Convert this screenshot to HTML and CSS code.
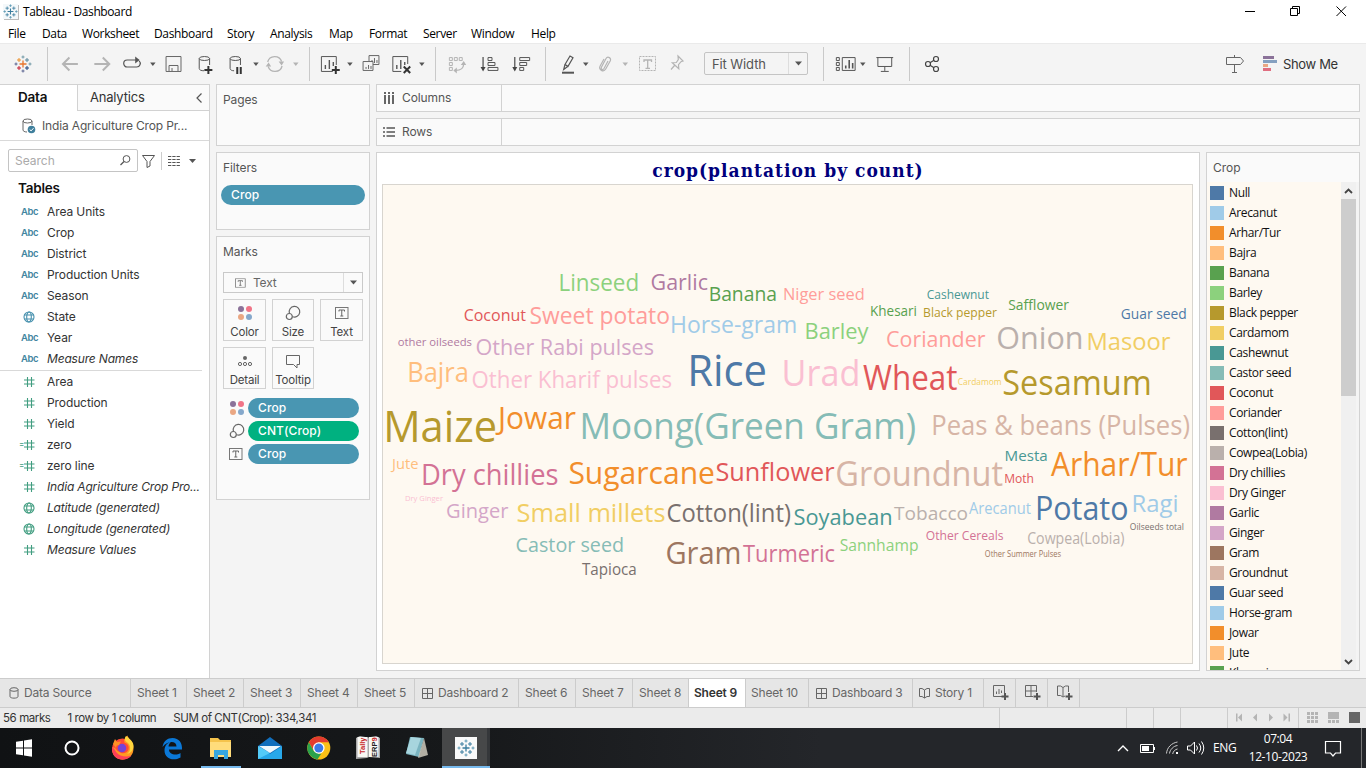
FILE: index.html
```html
<!DOCTYPE html>
<html lang="en">
<head>
<meta charset="utf-8">
<title>Tableau - Dashboard</title>
<link rel="stylesheet" href="styles.css">
</head>
<body>
<svg class="defs" width="0" height="0">
  <defs>
    <symbol id="caret" viewBox="0 0 7 5"><path d="M0 .5h7L3.5 4.5z" fill="currentColor"/></symbol>
    <symbol id="hash" viewBox="0 0 12 12"><path d="M4.500 1v10M8.500 1v10M1 4h10.500M1 8h10.500" fill="none" stroke="currentColor" stroke-width="1.100"/></symbol>
    <symbol id="globe" viewBox="0 0 12 12"><g fill="none" stroke="currentColor" stroke-width="1.100"><circle cx="6" cy="6" r="5"/><ellipse cx="6" cy="6" rx="2.300" ry="5"/><path d="M1.500 4h9M1.500 8h9"/></g></symbol>
    <symbol id="dots" viewBox="0 0 16 16"><circle cx="4" cy="4" r="3" fill="#8b7299"/><circle cx="12" cy="4" r="3" fill="#f07487"/><circle cx="4" cy="12" r="3" fill="#eaa783"/><circle cx="12" cy="12" r="3" fill="#85a8cb"/></symbol>
    <symbol id="size" viewBox="0 0 16 16"><g fill="none" stroke="#666" stroke-width="1.200"><path d="M4.400 8.300A5.300 5.300 0 1 1 7.600 11.700"/><circle cx="4.300" cy="11.500" r="3"/></g></symbol>
    <symbol id="tbox" viewBox="0 0 14 12"><rect x=".5" y=".5" width="12.500" height="11" fill="none" stroke="#777"/><path d="M4 4.500V3h5.500v1.500M6.750 3v6M5.300 9h3" fill="none" stroke="#666"/></symbol>
    <symbol id="window" viewBox="0 0 11 11"><path d="M.5.5h10v10H.5zM5.500.5v10M.5 5.500h10" fill="none" stroke="#666"/></symbol>
    <symbol id="book" viewBox="0 0 11 12"><path d="M.5 1.500h2.500l2.500 1.500L8 1.500h2.500v8H8L5.500 11 3 9.500H.5zM5.500 3v8" fill="none" stroke="#666"/></symbol>
    <symbol id="spark" viewBox="0 0 18 18"><path d="M9 5.500v7M5.500 9h7" stroke="var(--a,#e8762d)" stroke-width="1.300"/><path d="M5 3v4M3 5h4" stroke="var(--b,#eb912c)"/><path d="M13 3v4M11 5h4" stroke="var(--c,#5b879b)"/><path d="M5 11v4M3 13h4" stroke="var(--d,#c72035)"/><path d="M13 11v4M11 13h4" stroke="var(--e,#1f447e)"/><path d="M9 .5v3M7.500 2h3M16 7.500v3M14.500 9h3" stroke="var(--f,#7199a6)"/><path d="M2 7.500v3M.5 9h3M9 14.500v3M7.500 16h3" stroke="var(--g,#5c6692)"/></symbol>
  </defs>
</svg>

<header class="titlebar">
  <svg class="app-icon blue" width="15" height="15" viewBox="0 0 18 18"><use href="#spark"/></svg>
  <span class="app-title">Tableau - Dashboard</span>
  <svg class="win-buttons" width="110" height="21" viewBox="1240 0 110 21"><g fill="none" stroke="#000"><path d="M1245 10.500h10M1290.500 7.500h7v7h-7zM1292.500 7v-1.500h7v7H1298M1336.500 5.500l9.500 9.500M1346 5.500l-9.500 9.500"/></g></svg>
</header>

<nav class="menubar">
  <span>File</span><span>Data</span><span>Worksheet</span><span>Dashboard</span><span>Story</span><span>Analysis</span><span>Map</span><span>Format</span><span>Server</span><span>Window</span><span>Help</span>
</nav>

<div class="toolbar">
  <div class="tools t1"><svg width="18" height="18"><use href="#spark"/></svg></div>
  <svg class="tools" width="262" height="34" viewBox="48 47 262 34">
    <g fill="none" stroke="#b4b4b4" stroke-width="2"><path d="M63 64h15M69.500 57.500L63 64l6.500 6.500M94.500 64h15M103 57.500l6.500 6.500-6.500 6.500"/></g>
    <path d="M133 60h-5.500a3.500 3.500 0 0 0 0 7h9.500a3.600 3.600 0 0 0 2.500-6.200M131 60h6" fill="none" stroke="#555" stroke-width="1.200"/><path d="M135.500 56.500l4.500 3.500-4.500 3.500z" fill="#555"/>
    <path d="M150.500 62.500h5.500L153.250 66z" fill="#555"/>
    <path d="M166.500 56.500h15v15h-15zM169.500 71v-5.500h9V71M172.500 71v-3" fill="none" stroke="#666"/>
    <g fill="none" stroke="#555"><ellipse cx="205" cy="58.500" rx="5.200" ry="2"/><path d="M199.800 58.500v10c0 1.500 2 2.300 5 2.300M210.200 58.500V65"/></g>
    <path d="M209 66v8M205 70h8" stroke="#333" stroke-width="2"/>
    <g fill="none" stroke="#555"><ellipse cx="236" cy="58.500" rx="5.200" ry="2"/><path d="M230.800 58.500v10c0 1.500 2 2.300 4 2.300M241.200 58.500V65"/></g>
    <path d="M238 67v7M241.500 67v7" stroke="#333" stroke-width="2"/>
    <path d="M254 62.500h5.500L256.750 66z" fill="#555"/>
    <g fill="none" stroke="#b4b4b4" stroke-width="1.300"><path d="M268.500 62a7.300 7.300 0 0 1 14-.5M283 66a7.300 7.300 0 0 1-14 .5"/></g><path d="M279.500 61.500h5.500l-2.500 4zM266.500 66.500h5.500L269.500 62.500z" fill="#b4b4b4"/>
    <path d="M294 62.500h5.500L296.750 66z" fill="#b4b4b4"/>
  </svg>
  <svg class="tools" width="126" height="34" viewBox="310 47 126 34">
    <path d="M333 71.500h-11.500v-15h15V65" fill="none" stroke="#555"/><path d="M325.500 69v-4M329.500 69v-9M333.500 66v-4" stroke="#555" stroke-width="1.400"/><path d="M336 66v8M332 70h8" stroke="#333" stroke-width="2"/>
    <path d="M347.500 62.500h5.500L350.250 66z" fill="#555"/>
    <path d="M369.500 61v-5.500h10v9h-6M373.500 65v5.500h-10v-9h10zM372.500 62v-2M375 63v-5M377.500 63v-3M366.500 69v-2M369 69v-4M371.500 69v-3" fill="none" stroke="#666"/>
    <path d="M402 71.500h-8.500v-15h15V64" fill="none" stroke="#555"/><path d="M397.500 69v-4M401.500 69v-9M405.500 65v-3" stroke="#555" stroke-width="1.400"/><path d="M404.500 66.500l6.500 6.500M411 66.500l-6.500 6.500" stroke="#333" stroke-width="2"/>
    <path d="M420 62.500h5.500L422.750 66z" fill="#555"/>
  </svg>
  <svg class="tools" width="110" height="34" viewBox="436 47 110 34">
    <path d="M449.500 57.500h3v3h-3zM454.500 57.500h3v3h-3zM459.500 57.500h3v3h-3zM449.500 62.500h3v3h-3zM449.500 67.500h3v3h-3z" fill="none" stroke="#b4b4b4"/><path d="M464 64c-.3 4-3 6.500-8 6.500" fill="none" stroke="#b4b4b4" stroke-width="1.300"/><path d="M461 65h5.500L464 61zM457 67.500v6L453.500 70.500z" fill="#b4b4b4"/>
    <g fill="none" stroke="#555"><path d="M483.500 57v12" stroke-width="1.300"/><path d="M488.500 57.500h4v3h-4zM488.500 62.500h7v3h-7zM488.500 67.500h10v3h-10z"/></g><path d="M481 67h5l-2.500 4.500z" fill="#444"/>
    <g fill="none" stroke="#555"><path d="M515.500 57v12" stroke-width="1.300"/><path d="M520.500 57.500h10v3h-10zM520.500 62.500h7v3h-7zM520.500 67.500h4v3h-4z"/></g><path d="M513 67h5l-2.500 4.500z" fill="#444"/>
  </svg>
  <svg class="tools" width="158" height="34" viewBox="546 47 158 34">
    <path d="M565 64.500l5-8.500 3 1.800-5 8.500zM565 64.500l-1.300 5 4.300-3.200" fill="none" stroke="#555" stroke-width="1.200"/><path d="M562 72.700h12" stroke="#555" stroke-width="2"/>
    <path d="M583 62.500h5.500L585.750 66z" fill="#555"/>
    <path d="M608 61l-4 7.500c-1.300 2-3.600.7-2.600-1.300l4.500-8.500c1.800-3 6-.6 4.300 2.300l-4.500 8c-2 3.500-7.500 1-5.700-2.700l4-7.300" fill="none" stroke="#b4b4b4" stroke-width="1.200"/>
    <path d="M622.500 62.500h5.500L625.250 66z" fill="#b4b4b4"/>
    <rect x="639.500" y="56.500" width="16" height="14" fill="none" stroke="#b4b4b4" stroke-dasharray="2 1"/><path d="M644 62v-2h7.500v2M647.700 60v8M645.500 68.300h4.500" fill="none" stroke="#b4b4b4" stroke-width="1.300"/>
    <path d="M678 56l5 5-2 .7-2.500 3 .3 4-6.500-6 4-.2 2-3zM674.500 65.500l-3.500 4" fill="none" stroke="#b4b4b4" stroke-width="1.200"/>
  </svg>
  <div class="fit"><span>Fit Width</span><i><svg width="7" height="5"><use href="#caret"/></svg></i></div>
  <svg class="tools" width="86" height="34" viewBox="824 47 86 34">
    <path d="M836.500 57.500h3v3h-3zM836.500 62.500h3v3h-3zM836.500 67.500h3v3h-3zM842.500 57.500h13v13h-13z" fill="none" stroke="#555"/><path d="M846 68.500v-3M849.500 68.500V60M853 68.500V63" stroke="#555" stroke-width="1.600"/>
    <path d="M860.500 62.500h5.500L863.250 66z" fill="#555"/>
    <path d="M877 57.500h17M878.500 57.500v9h14v-9M885.500 67v4M881.500 71.500h8" fill="none" stroke="#555"/>
  </svg>
  <svg class="tools last" width="40" height="34" viewBox="910 47 40 34"><g fill="none" stroke="#444" stroke-width="1.200"><circle cx="928" cy="64" r="2.500"/><circle cx="936" cy="59" r="2.500"/><circle cx="936" cy="69" r="2.500"/><path d="M930 62.700l4-2.500M930 65.300l4 2.500"/></g></svg>
  <div class="showme">
    <svg width="56" height="20" viewBox="1225 54 56 20"><path d="M1226.500 57.500h14l3 3.500-3 3.500h-14zM1234.500 55v2.500M1234.500 65v7.500M1232 72.500h5" fill="none" stroke="#666"/><path d="M1263 56h11v3h-11z" fill="#8b7299"/><path d="M1263 60h14v3h-14z" fill="#85a0c0"/><path d="M1263 64h5v3h-5z" fill="#eaa783"/><path d="M1263 68h8v3h-8z" fill="#e06e80"/></svg>
    <span>Show Me</span>
  </div>
</div>

<main class="workspace">
  <aside class="data-pane">
    <div class="pane-tabs"><b>Data</b><span>Analytics<svg width="6" height="10" viewBox="0 0 6 10"><path d="M5.500.5L1 5l4.500 4.500" fill="none" stroke="#555" stroke-width="1.200"/></svg></span></div>
    <div class="source"><svg width="15" height="16" viewBox="0 0 15 16"><g fill="none" stroke="#666"><ellipse cx="5.500" cy="3" rx="4.500" ry="2"/><path d="M1 3v9c0 1 1.500 2 4 2M10 3v4"/></g><circle cx="9.500" cy="11.500" r="3.800" fill="#3f7f9c"/><path d="M7.700 11.500l1.400 1.400 2.400-2.700" fill="none" stroke="#fff"/></svg><span>India Agriculture Crop Pr...</span></div>
    <div class="search-row">
      <div class="search"><span>Search</span><svg width="11" height="11" viewBox="0 0 11 11"><circle cx="6.500" cy="4" r="3.400" fill="none" stroke="#555"/><path d="M4 6.500L.5 10" stroke="#555" stroke-width="1.300"/></svg></div>
      <svg width="62" height="20" viewBox="140 150 62 20"><path d="M142.500 154.500h12l-4.500 6v4.500l-3 1.500v-6z" fill="none" stroke="#555"/><path d="M161.500 151v18" stroke="#ccc"/><path d="M168 155.500h12M168 158.500h12M168 161.500h12M168 164.500h12" stroke="#555" stroke-dasharray="3.300 1"/><path d="M189 158h7l-3.500 4z" fill="#555"/></svg>
    </div>
    <h3>Tables</h3>
    <ul class="fields dims">
      <li><em>Abc</em>Area Units</li><li><em>Abc</em>Crop</li><li><em>Abc</em>District</li><li><em>Abc</em>Production Units</li><li><em>Abc</em>Season</li>
      <li><svg><use href="#globe"/></svg>State</li><li><em>Abc</em>Year</li><li class="it"><em>Abc</em>Measure Names</li>
    </ul>
    <ul class="fields meas">
      <li><svg><use href="#hash"/></svg>Area</li><li><svg><use href="#hash"/></svg>Production</li><li><svg><use href="#hash"/></svg>Yield</li>
      <li class="calc"><svg><use href="#hash"/></svg>zero</li><li class="calc"><svg><use href="#hash"/></svg>zero line</li>
      <li class="it"><svg><use href="#hash"/></svg>India Agriculture Crop Pro...</li><li class="it"><svg><use href="#globe"/></svg>Latitude (generated)</li><li class="it"><svg><use href="#globe"/></svg>Longitude (generated)</li><li class="it"><svg><use href="#hash"/></svg>Measure Values</li>
    </ul>
  </aside>

  <section class="cards">
    <div class="card pages"><h4>Pages</h4></div>
    <div class="card filters"><h4>Filters</h4><div class="pill">Crop</div></div>
    <div class="card marks"><h4>Marks</h4>
      <div class="mark-type"><svg width="11" height="10" viewBox="0 0 14 12"><use href="#tbox"/></svg><span>Text</span><i><svg width="7" height="5"><use href="#caret"/></svg></i></div>
      <div class="mark-grid">
        <div><svg width="16" height="16"><use href="#dots"/></svg>Color</div>
        <div><svg width="16" height="16"><use href="#size"/></svg>Size</div>
        <div><svg width="14" height="16"><use href="#tbox"/></svg>Text</div>
        <div><svg width="16" height="16" viewBox="0 0 16 16"><circle cx="8" cy="5" r="2" fill="#666"/><g fill="none" stroke="#666"><circle cx="3" cy="11" r="1.600"/><circle cx="8" cy="11" r="1.600"/><circle cx="13" cy="11" r="1.600"/></g></svg>Detail</div>
        <div><svg width="16" height="16" viewBox="0 0 16 16"><path d="M1.500 2.500h13v9H12V15L8.500 11.500h-7z" fill="none" stroke="#666"/></svg>Tooltip</div>
      </div>
      <div class="shelf-row"><svg width="16" height="16"><use href="#dots"/></svg><div class="pill">Crop</div></div>
      <div class="shelf-row"><svg width="16" height="16"><use href="#size"/></svg><div class="pill green">CNT(Crop)</div></div>
      <div class="shelf-row"><svg width="14" height="12"><use href="#tbox"/></svg><div class="pill">Crop</div></div>
    </div>
  </section>

  <section class="canvas">
    <div class="shelf"><span><svg width="12" height="12" viewBox="0 0 12 12"><path d="M2 3v9M6 3v9M10 3v9M2 0v2M6 0v2M10 0v2" stroke="#666" stroke-width="2"/></svg>Columns</span></div>
    <div class="shelf"><span><svg width="12" height="12" viewBox="0 0 12 12"><path d="M0 2h2M0 6h2M0 10h2M3.500 2H12M3.500 6H12M3.500 10H12" stroke="#555" stroke-width="1.700"/></svg>Rows</span></div>
    <div class="view-row">
      <div class="viz">
        <h2>crop(plantation by count)</h2>
        <svg id="cloud" width="809" height="478" viewBox="383 185 809 478"></svg>
      </div>
      <div class="legend">
        <h4>Crop</h4>
        <div class="legend-body"><ul id="legend"></ul>
          <div class="scroll"><svg width="9" height="6" viewBox="0 0 9 6"><path d="M1 5l3.500-3.500L8 5" fill="none" stroke="#444" stroke-width="1.800"/></svg><i></i><svg width="9" height="6" viewBox="0 0 9 6"><path d="M1 1l3.500 3.500L8 1" fill="none" stroke="#444" stroke-width="1.800"/></svg></div>
        </div>
      </div>
    </div>
  </section>
</main>

<nav class="sheets">
  <span><svg width="10" height="12" viewBox="0 0 10 12"><g fill="none" stroke="#666"><ellipse cx="5" cy="2.500" rx="4" ry="1.800"/><path d="M1 2.500V9.500c0 2.200 8 2.200 8 0v-7"/></g></svg>Data Source</span>
  <span>Sheet 1</span><span>Sheet 2</span><span>Sheet 3</span><span>Sheet 4</span><span>Sheet 5</span>
  <span class="dash"><svg width="11" height="11"><use href="#window"/></svg>Dashboard 2</span>
  <span>Sheet 6</span><span>Sheet 7</span><span class="short">Sheet 8</span><span class="active">Sheet 9</span><span class="ten">Sheet 10</span>
  <span class="dash"><svg width="11" height="11"><use href="#window"/></svg>Dashboard 3</span>
  <span class="story"><svg width="11" height="12"><use href="#book"/></svg>Story 1</span>
  <span class="new"><svg width="16" height="16" viewBox="0 0 16 16"><path d="M9 11.500H.5V.5h11V8M3.500 9V6.500M6 9V4M8.500 8V5.500" fill="none" stroke="#666"/><path d="M12 8v7M8.500 11.500h7" stroke="#555" stroke-width="2"/></svg></span>
  <span class="new"><svg width="16" height="16" viewBox="0 0 16 16"><path d="M8 11.500H.5V.5h11V7M6 .5v11M.5 6h11" fill="none" stroke="#666"/><path d="M12 8v7M8.500 11.500h7" stroke="#555" stroke-width="2"/></svg></span>
  <span class="new"><svg width="16" height="16" viewBox="0 0 16 16"><path d="M8 11L6 12 3.500 10.500H.5V1h3L6 2.500 8.500 1h3v6M6 2.500v9" fill="none" stroke="#666"/><path d="M12 8v7M8.500 11.500h7" stroke="#555" stroke-width="2"/></svg></span>
</nav>

<footer class="status">
  <span>56 marks</span><span>1 row by 1 column</span><span>SUM of CNT(Crop): 334,341</span>
  <svg width="367" height="20" viewBox="999 708 367 20"><path d="M999.500 708v20M1126.500 708v20M1153.500 708v20M1180.500 708v20M1227.500 708v20M1298.500 708v20" stroke="#ccc"/>
    <path d="M1236 713.500h1.500v8h-1.500zM1242 713.500v8l-4-4zM1257 713.500v8l-4-4zM1269 713.500v8l4-4zM1283.500 713.500v8l4-4zM1288.500 713.500h1.500v8h-1.500z" fill="#b4b4b4"/>
    <path d="M1307 712h3v3h-3zM1311 712h3v3h-3zM1315 712h3v3h-3zM1307 716h3v3h-3zM1311 716h3v3h-3zM1315 716h3v3h-3zM1307 720h3v3h-3zM1311 720h3v3h-3zM1315 720h3v3h-3zM1328 712h11v7h-11zM1328 720h3v3h-3zM1332 720h3v3h-3zM1336 720h3v3h-3z" fill="#b4b4b4"/><path d="M1349 712h11v11h-11z" fill="#666"/></svg>
</footer>

<div class="taskbar">
  <svg width="500" height="40" viewBox="0 728 500 40">
    <path d="M16 741.800l7-1v6.700h-7zM24 740.600l8-1.300v8.200h-8zM16 748.500h7v6.700l-7-1zM24 748.500h8v8.200l-8-1.300z" fill="#fff"/>
    <circle cx="72" cy="748" r="6.500" fill="none" stroke="#fff" stroke-width="2"/>
    <circle cx="122.500" cy="749" r="10.500" fill="#ff4a36"/><path d="M112 748c0 8 5 11.500 10.500 11.500s11-4 11-11c0-5-2-8-4-9.500-1-1.500-2-2.500-2-3.500-3 2-4 5-3 7 3 1 5 3.500 4 7s-6 5-9 2.500c-3.500-1-4-6-7.500-4z" fill="#ff9a22"/><path d="M126 736c-2 3-1 5 2 7 3 3 3 8-1 11 4-1 6.500-4 6.500-8 0-4-3-6-5-8z" fill="#ffd53e"/><path d="M112 747c-.5 8 4 12.500 10.500 12.500 4 0 7-1.500 9-4-5 2-12 1-15-3-1.500-2-2-4-4.500-5.500z" fill="#ff3f58"/><circle cx="122" cy="748" r="4.300" fill="#7542d6"/><path d="M113 744l2-5 2 3 4-.5-2 3.500c-2 0-3 1-3 3z" fill="#ff8f25"/>
    <path d="M162.500 747c1-6 5-9 10-9 6.500 0 10 5 9.500 11.500h-13c0 5 7 6.500 11.500 3.500v4.500c-7 4-16 1.500-16-7 0-5 3-8 7-9-2 1.500-2.700 3-3 5h8c0-6-9-6-14 .5z" fill="#0b78d7"/>
    <path d="M210 738h8l2 2h11v17h-21z" fill="#f5c34c"/><path d="M210 742h21v15h-21z" fill="#ffdc7b"/><path d="M214 759v-9h14v9h-4v-4h-6v4z" fill="#36a6df"/><path d="M201 766h40v2h-40z" fill="#76b9ed"/>
    <path d="M258 746l12-9 12 9v12h-24z" fill="#126fbd"/><path d="M258 746l12 8 12-8v13h-24z" fill="#28a8ea"/><path d="M258 746l12 7-12 6z" fill="#53cbf9"/><path d="M259 746h22l-11 7z" fill="#f0f8fd"/>
    <circle cx="318.800" cy="748" r="11.500" fill="#fbc016"/><path d="M308.800 742.300A11.500 11.500 0 0 1 328.800 742.300h-10l-5 8.500z" fill="#e33b2e"/><path d="M308.800 742.300l5 8.700 5 2.700 2.500 0-4 5.700a11.500 11.500 0 0 1-8.500-17.100z" fill="#2ba24c"/><circle cx="318.800" cy="748" r="5.800" fill="#fff"/><circle cx="318.800" cy="748" r="4.500" fill="#3c79e6"/>
    <path d="M356 738l4-2 8 1.500 8-1.500 4 2v20l-11-1-2 1-11 1z" fill="#aaa"/><path d="M357.500 737h10v20h-10zM369 737h9.500v20H369z" fill="#f8f8f5"/><text x="-754" y="365" transform="rotate(-90)" class="tally red">Tally</text><text x="-757" y="376.500" transform="rotate(-90)" class="tally">ERP</text><text x="-741.500" y="376.500" transform="rotate(-90)" class="tally red">9</text>
    <path d="M410 737l14 1-5 19-13-3z" fill="#7ab4c0"/><path d="M411 737l10 1-6 17-9-2z" fill="#a7d5de"/><path d="M424 738l4 17-10 3z" fill="#d9d5c6" opacity=".8"/>
    <path d="M442 728h45v40h-45z" fill="#474849"/><path d="M487 728h3v40h-3z" fill="#35373a"/><path d="M442 766h48v2h-48z" fill="#76b9ed"/><path d="M455 737h22v22h-22z" fill="#f9f9f9"/><svg class="blue" x="457" y="739" width="18" height="18"><use href="#spark"/></svg>
  </svg>
  <svg class="tray" width="92" height="40" viewBox="1116 728 92 40"><g fill="none" stroke="#fff"><path d="M1118 751l5-5 5 5" stroke-width="1.400"/><path d="M1140.500 744.500h13v8h-13zM1154.500 747v3"/><path d="M1177.500 742c-6 1-10.500 5.500-11 11.500M1177.500 745.500c-4 .5-7.500 4-8 8M1177.500 749c-2.500.5-4.300 2.300-4.800 5" stroke="#ccc"/><path d="M1187.500 746h3l4-4v12l-4-4h-3zM1196.500 745.500q2 2.500 0 5M1199 743.500q3.500 4.500 0 9M1201.500 741.500q4.500 6.500 0 13"/></g><path d="M1142 746h7v5h-7zM1176 752h2v2h-2z" fill="#fff"/></svg>
  <span class="lang">ENG</span>
  <div class="clock"><span>07:04</span><span>12-10-2023</span></div>
  <svg width="46" height="40" viewBox="1320 728 46 40"><path d="M1325.500 741.500h15v11.500h-5l-2.500 3-2.500-3h-5z" fill="none" stroke="#fff" stroke-width="1.200"/><path d="M1361.500 728v40" stroke="#777"/></svg>
</div>
<script src="script.js"></script>
</body>
</html>
```
FILE: script.js
```js
const palette = ['#4e79a7', '#a0cbe8', '#f28e2b', '#ffbe7d', '#59a14f', '#8cd17d', '#b6992d', '#f1ce63', '#499894', '#86bcb6',
  '#e15759', '#ff9d9a', '#79706e', '#bab0ac', '#d37295', '#fabfd2', '#b07aa1', '#d4a6c8', '#9d7660', '#d7b5a6'];

const names = ['Null', 'Arecanut', 'Arhar/Tur', 'Bajra', 'Banana', 'Barley', 'Black pepper', 'Cardamom', 'Cashewnut', 'Castor seed',
  'Coconut', 'Coriander', 'Cotton(lint)', 'Cowpea(Lobia)', 'Dry chillies', 'Dry Ginger', 'Garlic', 'Ginger', 'Gram', 'Groundnut',
  'Guar seed', 'Horse-gram', 'Jowar', 'Jute', 'Khesari'];

document.getElementById('legend').innerHTML = names
  .map((n, i) => `<li><i style="background:${palette[i % 20]}"></i>${n}</li>`).join('');

// word, left, right, baseline, font size, palette index
const words = [
  ['Linseed', 560, 638, 291, 23.5, 5], ['Garlic', 651, 708, 290, 22.5, 16], ['Banana', 710, 776, 301, 20.5, 4],
  ['Niger seed', 784, 864, 300, 16.5, 11], ['Coconut', 464, 526, 321, 16.5, 10], ['Sweet potato', 530, 670, 324, 23, 11],
  ['Horse-gram', 671.5, 796, 333, 23, 1], ['Khesari', 871, 917, 316, 15, 4], ['Cashewnut', 927, 989, 299, 13, 8],
  ['Black pepper', 924, 997, 317, 13.5, 6], ['Safflower', 1008.5, 1069, 310, 15, 4], ['Guar seed', 1121, 1186, 319, 14.5, 0],
  ['Barley', 806, 868.5, 339, 22.5, 5], ['Coriander', 886.5, 985.5, 347, 22, 11], ['Onion', 997, 1082, 349, 31.5, 13],
  ['Masoor', 1088, 1170.5, 350, 24.5, 7], ['other oilseeds', 398, 472, 346, 11.5, 16], ['Other Rabi pulses', 476, 654, 355, 22.5, 17],
  ['Bajra', 409, 467.5, 382, 27, 3], ['Other Kharif pulses', 472, 672, 388, 23, 15], ['Rice', 690, 767, 386, 44, 0],
  ['Urad', 784, 858.5, 386, 37, 15], ['Wheat', 863, 957.5, 390, 34, 10], ['Cardamom', 958, 1001, 384.5, 9, 7],
  ['Sesamum', 1003, 1150, 395, 34, 6], ['Maize', 386, 497, 442, 44, 6], ['Jowar', 498, 576, 429, 31, 2],
  ['Moong(Green Gram)', 582, 916, 439, 37, 9], ['Peas & beans (Pulses)', 933, 1190, 435, 26.5, 19], ['Jute', 392, 418.5, 469, 14.5, 3],
  ['Dry chillies', 423, 558.5, 485, 30, 14], ['Sugarcane', 569, 715, 484, 31, 2], ['Sunflower', 716, 834.5, 481, 26, 10],
  ['Groundnut', 836, 1003, 486, 34.5, 19], ['Mesta', 1005.5, 1047, 461, 15, 8], ['Moth', 1005, 1034, 483, 12.5, 10],
  ['Arhar/Tur', 1051, 1187.5, 476, 32.5, 2], ['Dry Ginger', 405.5, 443, 501, 8, 15], ['Ginger', 446.5, 508.5, 518, 20.5, 17],
  ['Small millets', 517, 665.5, 522, 26, 7], ['Cotton(lint)', 667, 791, 522, 25, 12], ['Soyabean', 794, 891.5, 525, 22, 8],
  ['Tobacco', 894, 968, 520, 19, 13], ['Arecanut', 969, 1031, 514, 15.5, 1], ['Potato', 1037, 1128.5, 520, 32, 0],
  ['Ragi', 1133, 1178.5, 512, 23.5, 1], ['Oilseeds total', 1130, 1184, 530, 9.5, 12], ['Castor seed', 516, 623, 552, 20.5, 9],
  ['Tapioca', 582, 636, 575, 15.5, 12], ['Gram', 666, 740, 564, 31, 18], ['Turmeric', 743, 835, 562, 23, 14],
  ['Sannhamp', 840, 918.5, 551, 16.5, 5], ['Other Cereals', 926, 1003.5, 540, 13, 14], ['Other Summer Pulses', 985, 1061, 556.5, 8.5, 18],
  ['Cowpea(Lobia)', 1027.500, 1124.5, 544, 15.5, 13]
];

const ns = 'http://www.w3.org/2000/svg';
const cloud = document.getElementById('cloud');
for (const [word, left, right, base, size, hue] of words) {
  const lead = (/^[BDHKLMNPRU]/.test(word) ? 0.065 : /^[CGOSo]/.test(word) ? 0.02 : 0) * size;
  const trail = (/[anmdu]$/.test(word) ? 0.05 : 0) * size;
  const t = document.createElementNS(ns, 'text');
  t.setAttribute('x', left - lead);
  t.setAttribute('y', base + 0.3);
  t.setAttribute('font-size', size);
  t.setAttribute('fill', palette[hue]);
  t.setAttribute('textLength', right - left + lead + trail);
  t.setAttribute('lengthAdjust', 'spacingAndGlyphs');
  t.textContent = word;
  cloud.appendChild(t);
}
```
FILE: styles.css
```css
* { box-sizing: border-box; }
body { margin: 0; width: 1366px; height: 768px; overflow: hidden; background: #f4f4f4; font: 12px/16px Inter, sans-serif; color: #333; display: flex; flex-direction: column; }
h2, h3, h4, ul { margin: 0; padding: 0; font-weight: 400; list-style: none; }
svg { display: block; flex: none; }
i, em { font-style: normal; }
.defs { display: none; }

.titlebar { height: 22px; flex: none; background: #fff; display: flex; align-items: center; padding: 2px 0 0 3px; }
.app-icon { background: #f4f8fa; box-shadow: 1px 1px 0 #bbb; margin-top: -2px; }
.blue { --a: #3b7d9e; --b: #3b7d9e; --c: #3b7d9e; --d: #3b7d9e; --e: #3b7d9e; --f: #5f9ab5; --g: #5f9ab5; }
.app-title { margin-left: 5px; color: #000; font: 12px/16px "Open Sans", sans-serif; letter-spacing: -.4px; }
.win-buttons { margin: -2px 16px 0 auto; }

.menubar { height: 21px; flex: none; background: #fff; display: grid; grid-template-columns: 34px 40px 72px 73px 43px 59px 40px 54px 48px 60px 60px; padding: 4px 0 0 8px; color: #000; font: 12px/16px "Open Sans", sans-serif; letter-spacing: -.35px; }

.toolbar { height: 41px; flex: none; border-top: 1px solid #eaeaea; display: flex; align-items: center; padding-bottom: 1px; }
.tools { border-right: 1px solid #c9c9c9; }
.tools.last { border: 0; }
.t1 { width: 48px; height: 34px; padding: 8px 0 0 14px; }
.fit { width: 104px; height: 23px; border: 1px solid #c4c4c4; border-radius: 2px; margin: 0 15px 0 0; display: flex; align-items: center; padding-left: 7px; font-size: 13px; color: #555; letter-spacing: -.1px; }
.tools:has(+ .fit) { border: 0; }
.fit + .tools { border-left: 1px solid #c9c9c9; width: 87px; }
.fit i, .mark-type i { margin-left: auto; width: 19px; height: 100%; border-left: 1px solid #ddd; display: grid; place-items: center; color: #555; }
.showme { margin: 0 27px 0 auto; display: flex; align-items: center; gap: 2px; font-size: 13px; color: #333; letter-spacing: -.35px; }
.showme span { width: 56px; white-space: nowrap; }

.workspace { height: 594px; flex: none; display: flex; }
.data-pane { width: 210px; background: #fff; border-right: 1px solid #d2d2d2; border-top: 1px solid #d2d2d2; flex: none; }
.pane-tabs { height: 26px; display: flex; align-items: stretch; font-size: 13px; line-height: 25px; letter-spacing: -.2px; }
.pane-tabs b { width: 77px; padding-left: 18px; color: #111; font-weight: 600; font-size: 13.500px; }
.pane-tabs span { flex: 1; background: #fafafa; border: solid #d2d2d2; border-width: 0 0 1px 1px; padding: 0 7px 0 12px; display: flex; align-items: center; justify-content: space-between; }
.source { height: 30px; border-bottom: 1px solid #d9d9d9; display: flex; align-items: center; padding-left: 22px; gap: 5px; color: #555; letter-spacing: -.15px; }
.search-row { display: flex; margin: 8px 0 0 8px; align-items: center; gap: 2px; }
.search { width: 130px; height: 23px; border: 1px solid #c4c4c4; border-radius: 2px; display: flex; align-items: center; justify-content: space-between; padding: 0 6px 0 6px; color: #aaa; font-size: 12px; }
.data-pane h3 { margin: 8px 0 4px 18px; font-weight: 600; font-size: 13.500px; line-height: 17px; color: #111; letter-spacing: -.2px; }
.fields li { height: 21px; line-height: 21px; display: flex; align-items: center; padding-left: 47px; white-space: nowrap; letter-spacing: -.1px; }
.fields li em { width: 26px; margin-left: -26px; color: #4285a0; font-size: 9.500px; font-weight: 600; letter-spacing: -.4px; }
.fields li svg { width: 12px; height: 12px; margin: 0 12px 0 -24px; }
.dims { border-bottom: 1px solid #d9d9d9; padding-bottom: 1px; width: 202px; }
.dims svg { color: #4690ad; }
.meas svg { color: #419d80; }
.calc::before { content: "="; color: #419d80; width: 6px; margin-left: -28px; margin-right: 22px; font-size: 8px; }
.fields li.it { font-style: italic; letter-spacing: -.17px; }

.cards { width: 154px; margin-left: 6px; flex: none; }
.card { background: #fafafa; border: 1px solid #d2d2d2; margin-bottom: 6px; padding: 7px 6px; }
.card h4 { color: #555; line-height: 16px; letter-spacing: -.1px; }
.pages { height: 62px; }
.filters { height: 78px; padding-left: 4px; padding-right: 4px; }
.filters h4 { margin-left: 2px; }
.pill { height: 20px; border-radius: 10px; background: #4996b2; color: #fff; padding-left: 10px; line-height: 20px; font-weight: 500; letter-spacing: .1px; }
.pill.green { background: #00b180; }
.filters .pill { margin-top: 9px; }
.marks { height: 264px; }
.mark-type { margin-top: 12px; height: 21px; width: 140px; border: 1px solid #c9c9c9; display: flex; align-items: center; padding-left: 11px; gap: 7px; color: #666; letter-spacing: -.2px; }
.mark-grid { margin: 6px 0 9px; display: grid; grid-template-columns: 43px 42px 43px; gap: 6px; }
.mark-grid div { height: 42px; border: 1px solid #d2d2d2; display: flex; flex-direction: column; align-items: center; padding-top: 5px; gap: 3px; color: #444; font-size: 11.500px; letter-spacing: -.2px; }
.shelf-row { display: flex; align-items: center; margin-bottom: 3px; padding-left: 6px; }
.shelf-row svg { margin-right: 3px; }
.shelf-row svg[width="14"] { margin-right: 5px; }
.shelf-row .pill { width: 111px; }

.canvas { width: 984px; margin-left: 6px; }
.shelf { height: 28px; background: #fafafa; border: 1px solid #d2d2d2; margin-bottom: 6px; }
.shelf span { display: flex; align-items: center; gap: 7px; height: 100%; width: 125px; border-right: 1px solid #d2d2d2; padding-left: 6px; color: #555; letter-spacing: -.1px; }
.view-row { display: flex; gap: 6px; }
.viz { width: 824px; height: 519px; background: #fff; border: 1px solid #d2d2d2; }
.viz h2 { height: 31px; text-align: center; white-space: nowrap; font: bold 19px/35px "DejaVu Serif Condensed", "DejaVu Serif", serif; font-stretch: condensed; letter-spacing: 1px; color: #00007c; }
#cloud { box-sizing: content-box; border: 1px solid #d8d5cf; background: #fef9f1; margin-left: 5px; font-family: "Open Sans", sans-serif; }
.legend { width: 154px; height: 519px; border: 1px solid #d2d2d2; background: #fafafa; }
.legend h4 { height: 29px; padding: 7px 6px 0; color: #555; }
.legend-body { height: 488px; display: flex; justify-content: space-between; background: #fef9f1; border-right: 3px solid #f4f4f4; overflow: hidden; }
.legend li { height: 20px; display: flex; align-items: center; padding: 1px 0 0 3px; color: #111; font: 12px/19px "Open Sans", sans-serif; letter-spacing: -.35px; white-space: nowrap; }
.legend li i { width: 14px; height: 14px; margin: 1px 5px 0 0; }
.scroll { width: 15px; background: #f0f0f0; display: flex; flex-direction: column; align-items: center; padding: 6px 0 5px; }
.scroll i { width: 15px; height: 197px; background: #cdcdcd; margin: 5px 0 auto; }

.sheets { height: 30px; flex: none; background: #e6e6e6; border: solid #ccc; border-width: 1px 0; display: flex; color: #666; line-height: 28px; letter-spacing: -.2px; }
.sheets span { width: 57px; flex: none; border-right: 1px solid #ccc; padding-left: 6px; white-space: nowrap; display: flex; align-items: center; }
.sheets span:first-child { width: 131px; padding-left: 9px; }
.sheets span:nth-child(2), .sheets .short { width: 56px; }
.sheets svg { margin-right: 5px; }
.sheets .dash { width: 104px; padding-left: 7px; }
.sheets .active { width: 57px; padding-left: 5px; background: #fff; color: #333; font-weight: 600; letter-spacing: -.2px; }
.sheets .ten { width: 63px; padding-left: 5px; }
.sheets .story { width: 71px; }
.sheets .new { width: 32px; padding-left: 9px; }

.status { height: 20px; flex: none; background: #ebebeb; display: flex; align-items: center; padding-left: 3px; font-size: 11.500px; gap: 17px; letter-spacing: -.41px; }
.status svg { margin-left: auto; }

.taskbar { height: 40px; flex: none; background: linear-gradient(90deg, #101214, #17191b 35%, #24262a 60%, #24262a); display: flex; color: #fff; font: 12px/18px "Open Sans", sans-serif; letter-spacing: -.4px; }
.tray { margin-left: auto; margin-right: 5px; }
.lang { line-height: 40px; width: 30px; }
.clock { width: 70px; display: flex; flex-direction: column; align-items: center; padding-top: 2px; margin-right: 7px; }
.tally { font: bold 7.500px "Liberation Sans", sans-serif; fill: #222; letter-spacing: 0; }
.tally.red { fill: #c92a2a; }
```
